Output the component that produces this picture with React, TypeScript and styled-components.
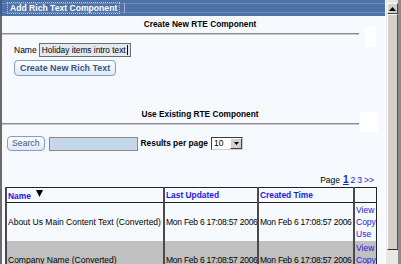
import styled, { createGlobalStyle } from "styled-components";

const GlobalStyle = createGlobalStyle`
  html, body {
    margin: 0;
    padding: 0;
    overflow: hidden;
    background: #f6faff;
  }
  body {
    font-family: "Liberation Sans", Arial, sans-serif;
    font-size: 8.5px;
    color: #000;
  }
`;

const rows = [
  { name: "About Us Main Content Text (Converted)", shaded: false },
  { name: "Company Name (Converted)", shaded: true },
];

const stamp = "Mon Feb 6 17:08:57 2006";

export default function App() {
  return (
    <>
      <GlobalStyle />
      <Window>
        <Main>
          <TitleBar>
            <Tab>Add Rich Text Component</Tab>
            <TabEdge />
          </TitleBar>

          <Content>
            <SectionRow>
              <Section>
                <Heading>Create New RTE Component</Heading>
                <Rule />
              </Section>
              <Blank $left={6} $top={9} $width={11} />
            </SectionRow>

            <Form>
              <Field>
                <span>Name</span>
                <NameInput>
                  Holiday items intro text<Caret />
                </NameInput>
              </Field>
              <Button $bold>Create New Rich Text</Button>
            </Form>

            <SectionRow $gap={32}>
              <Section>
                <Heading>Use Existing RTE Component</Heading>
                <Rule />
              </Section>
              <Blank $left={1} $top={4} $width={18} />
            </SectionRow>

            <SearchRow>
              <Button $small>Search</Button>
              <SearchInput />
              <strong>Results per page</strong>
              <Select>
                <span>10</span>
                <SelectArrow>
                  <svg width="5" height="3" viewBox="0 0 5 3">
                    <path d="M0 0h5L2.5 3z" fill="#000" />
                  </svg>
                </SelectArrow>
              </Select>
            </SearchRow>

            <Pager>
              <span>Page</span>
              <Current>1</Current>
              <PageLink>2</PageLink>
              <PageLink>3</PageLink>
              <PageLink>&gt;&gt;</PageLink>
            </Pager>

            <Table>
              <colgroup>
                <col style={{ width: 158 }} />
                <col style={{ width: 94 }} />
                <col style={{ width: 96 }} />
                <col style={{ width: 22 }} />
              </colgroup>
              <thead>
                <tr>
                  <HeadCell>
                    Name
                    <SortArrow width="7" height="7" viewBox="0 0 7 7">
                      <path d="M0 0h7L3.5 7z" fill="#000" />
                    </SortArrow>
                  </HeadCell>
                  <HeadCell>Last Updated</HeadCell>
                  <HeadCell>Created Time</HeadCell>
                  <HeadCell />
                </tr>
              </thead>
              <tbody>
                {rows.map((r) => (
                  <Row key={r.name} $shaded={r.shaded}>
                    <Cell>{r.name}</Cell>
                    <Cell $date>{stamp}</Cell>
                    <Cell $date>{stamp}</Cell>
                    <Actions>
                      <a>View</a>
                      <a>Copy</a>
                      <a>Use</a>
                    </Actions>
                  </Row>
                ))}
              </tbody>
            </Table>
          </Content>
        </Main>

        <Scrollbar>
          <UpButton>
            <svg width="7" height="4" viewBox="0 0 7 4">
              <path d="M3.5 0L7 4H0z" fill="#000" />
            </svg>
          </UpButton>
          <Thumb />
        </Scrollbar>
      </Window>
    </>
  );
}

const Window = styled.div`
  width: 401px;
  height: 264px;
  display: flex;
  overflow: hidden;
  background: #f6faff;
`;

const Main = styled.div`
  width: 385px;
  display: flex;
  flex-direction: column;
`;

const TitleBar = styled.div`
  height: 16px;
  flex: none;
  display: flex;
  align-items: center;
  background: #4d72a7;
  border-left: 2px solid #3d5d8c;
  box-sizing: border-box;
  padding-left: 6px;
  background-image: linear-gradient(
    to bottom,
    transparent 3px,
    rgba(255, 255, 255, 0.18) 3px,
    rgba(255, 255, 255, 0.18) 4px,
    transparent 4px,
    transparent 12px,
    rgba(255, 255, 255, 0.18) 12px,
    rgba(255, 255, 255, 0.18) 13px,
    transparent 13px
  );
`;

const Tab = styled.div`
  color: #fff;
  font-weight: bold;
  font-size: 8.6px;
  line-height: 10px;
  padding: 0 2px;
  outline: 1px dotted rgba(255, 255, 255, 0.6);
`;

const TabEdge = styled.div`
  width: 1px;
  height: 10px;
  margin-left: 5px;
  background: #9bb2d3;
`;

const Content = styled.div`
  flex: 1;
  display: flex;
  flex-direction: column;
  border-left: 2px solid #6a6a6a;
  background: #f6faff;
`;

const SectionRow = styled.div<{ $gap?: number }>`
  display: flex;
  align-items: flex-start;
  height: 17px;
  margin-top: ${({ $gap }) => $gap ?? 2}px;
`;

const Section = styled.div`
  width: 357px;
  flex: none;
`;

const Heading = styled.div`
  font-weight: bold;
  font-size: 8.3px;
  line-height: 12px;
  text-align: center;
  padding-left: 39px;
`;

const Rule = styled.div`
  height: 1px;
  margin-top: 3px;
  background: #8c8c8c;
  border-bottom: 1px solid #c8c8c8;
`;

const Blank = styled.div<{ $left: number; $top: number; $width: number }>`
  flex: none;
  width: ${({ $width }) => $width}px;
  height: 20px;
  margin-left: ${({ $left }) => $left}px;
  margin-top: ${({ $top }) => $top}px;
  background: #fff;
`;

const Form = styled.div`
  display: flex;
  flex-direction: column;
  align-items: flex-start;
  gap: 3px;
  padding: 8px 0 0 12px;
`;

const Field = styled.div`
  display: flex;
  align-items: center;
  gap: 2px;
`;

const NameInput = styled.div`
  width: 88px;
  height: 12px;
  line-height: 12px;
  padding-left: 2px;
  font-size: 8.3px;
  background: #e3e9f1;
  border: 1px solid #6f6f6f;
  white-space: nowrap;
  display: flex;
  align-items: center;
`;

const Caret = styled.span`
  width: 1px;
  height: 10px;
  margin-left: 1px;
  background: #000;
`;

const Button = styled.div<{ $bold?: boolean; $small?: boolean }>`
  display: inline-flex;
  align-items: center;
  justify-content: center;
  box-sizing: border-box;
  height: ${({ $small }) => ($small ? 15 : 16)}px;
  padding: 0 ${({ $small }) => ($small ? 4 : 5)}px;
  border: 1px solid #7e9fcb;
  border-radius: 4px;
  background: linear-gradient(#ffffff, #dfe9f6);
  color: #34578a;
  font-size: ${({ $small }) => ($small ? 8.7 : 8.9)}px;
  font-weight: ${({ $bold }) => ($bold ? "bold" : "normal")};
`;

const SearchRow = styled.div`
  display: flex;
  align-items: center;
  padding: 10px 0 0 5px;

  strong {
    font-size: 8.4px;
    margin-left: 3px;
  }
`;

const SearchInput = styled.div`
  width: 87px;
  height: 12px;
  margin-left: 4px;
  margin-top: 2px;
  background: #c6d7eb;
  border: 1px solid #8a8a8a;
`;

const Select = styled.div`
  display: flex;
  align-items: center;
  width: 30px;
  height: 11px;
  margin-left: 3px;
  border: 1px solid #3a3a3a;
  border-right-color: #d0d0d0;
  border-bottom-color: #d0d0d0;
  background: #fff;

  span {
    flex: 1;
    padding-left: 2px;
    font-size: 8.5px;
  }
`;

const SelectArrow = styled.div`
  width: 10px;
  height: 9px;
  display: flex;
  align-items: center;
  justify-content: center;
  background: #d4d0c8;
  border: 1px solid;
  border-color: #fff #404040 #404040 #fff;
`;

const Pager = styled.div`
  align-self: flex-end;
  display: flex;
  align-items: baseline;
  gap: 2px;
  margin: 23px 11px 0 0;
  line-height: 11px;

  span {
    margin-right: 1px;
  }
`;

const PageLink = styled.a`
  color: #1a1ae6;
`;

const Current = styled.a`
  color: #1a1ae6;
  font-size: 10px;
  font-weight: bold;
  text-decoration: underline;
`;

const Table = styled.table`
  width: 370px;
  margin: 1px 0 0 3px;
  border-collapse: collapse;
  table-layout: fixed;
  border: 1px solid #222;
`;

const HeadCell = styled.th`
  height: 14px;
  padding: 0 1px;
  text-align: left;
  vertical-align: middle;
  color: #1a1ae6;
  font-size: 8.4px;
  font-weight: bold;
  border-bottom: 1px solid #222;
  border-left: 2px solid #4a4a4a;
  white-space: nowrap;
`;

const SortArrow = styled.svg`
  margin-left: 5px;
  vertical-align: 2px;
`;

const Row = styled.tr<{ $shaded: boolean }>`
  background: ${({ $shaded }) => ($shaded ? "#c0c0c0" : "#f6faff")};
`;

const Cell = styled.td<{ $date?: boolean }>`
  height: 38px;
  padding: 0 1px;
  vertical-align: middle;
  white-space: nowrap;
  overflow: hidden;
  letter-spacing: ${({ $date }) => ($date ? "-0.25px" : "0")};
  border-left: 2px solid #4a4a4a;
`;

const Actions = styled.td`
  padding: 0 1px;
  vertical-align: middle;
  border-left: 2px solid #4a4a4a;

  a {
    display: block;
    color: #1a1ae6;
    line-height: 12px;
  }
`;

const Scrollbar = styled.div`
  width: 16px;
  flex: none;
  box-sizing: border-box;
  display: flex;
  flex-direction: column;
  padding: 3px 0 0 1px;
  background: #e9e7e2;
  border-left: 1px solid #fff;
  border-right: 3px solid #8a8a8a;
`;

const UpButton = styled.div`
  width: 11px;
  height: 11px;
  box-sizing: border-box;
  display: flex;
  align-items: center;
  justify-content: center;
  background: #d4d0c8;
  border: 1px solid;
  border-color: #fff #404040 #404040 #fff;
`;

const Thumb = styled.div`
  width: 11px;
  height: 236px;
  box-sizing: border-box;
  background: #d4d0c8;
  border: 1px solid;
  border-color: #fff #555 #303030 #fff;
`;
